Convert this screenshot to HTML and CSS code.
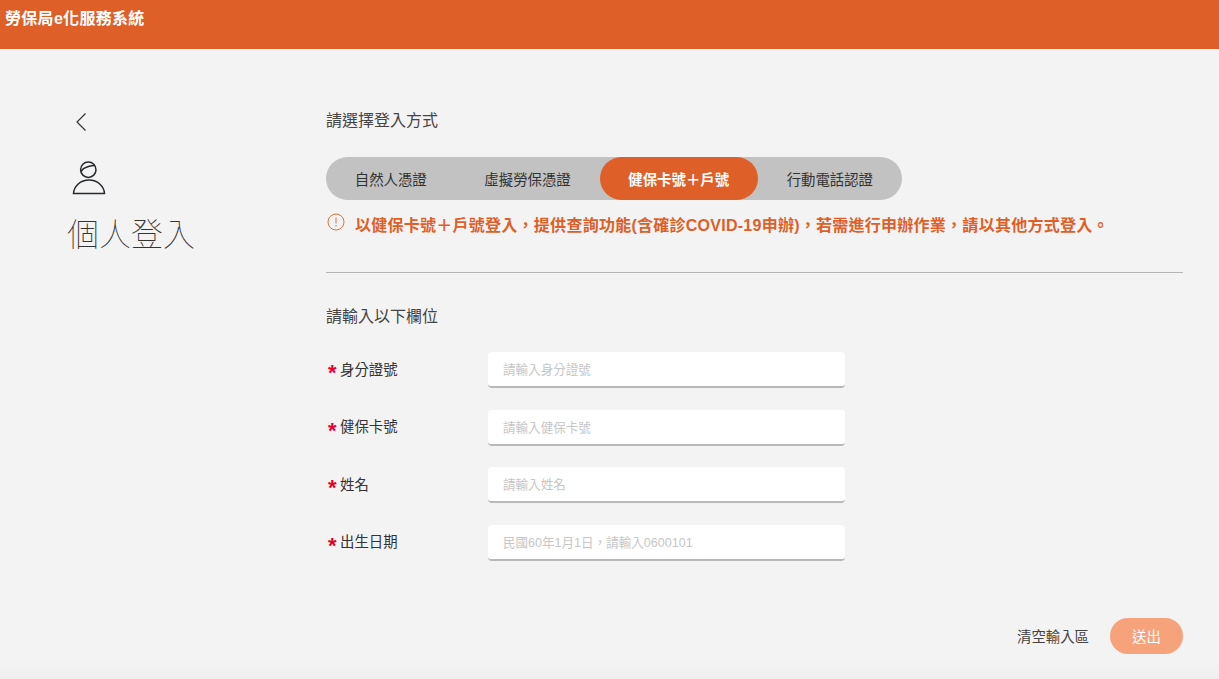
FILE: index.html
```html
<!DOCTYPE html>
<html lang="zh-Hant">
<head>
<meta charset="utf-8">
<title>勞保局e化服務系統</title>
<link rel="stylesheet" href="styles.css">
</head>
<body>
<header class="topbar"><span class="brand">勞保局e化服務系統</span></header>
<div class="page">
  <aside class="side">
    <svg class="back" width="12" height="20" viewBox="0 0 12 20"><path d="M10.500 1.500 2 10l8.500 8.500" fill="none" stroke="#333" stroke-width="1.200"/></svg>
    <svg class="person" width="36" height="36" viewBox="0 0 36 36" fill="none" stroke="#25282c" stroke-width="1.500">
      <circle cx="17.300" cy="9.700" r="7.700"/>
      <path d="M10 11.500c1.500-2.500 3.500-3.800 6-4.500 3-.8 5-2 8-1.500"/>
      <path d="M2.500 33.500h31C33 26 26.500 20 18 20S3 26 2.500 33.500Z"/>
    </svg>
    <h1 class="title">個人登入</h1>
  </aside>
  <main class="main">
    <h2 class="section">請選擇登入方式</h2>
    <div class="tabs">
      <span class="tab">自然人憑證</span>
      <span class="tab">虛擬勞保憑證</span>
      <span class="tab active">健保卡號＋戶號</span>
      <span class="tab">行動電話認證</span>
    </div>
    <p class="notice">
      <svg class="alert" width="18" height="18" viewBox="0 0 18 18" fill="none" stroke="#e0703f" stroke-width="1"><circle cx="9" cy="9" r="8"/><path d="M9 4.500v6M9 12v1.500"/></svg>
      <span>以健保卡號＋戶號登入，提供查詢功能(含確診COVID-19申辦)，若需進行申辦作業，請以其他方式登入。</span>
    </p>
    <hr class="rule">
    <h2 class="section second">請輸入以下欄位</h2>
    <form class="fields">
      <label class="row"><span class="label"><i class="star">*</i>身分證號</span><input class="input" placeholder="請輸入身分證號"></label>
      <label class="row"><span class="label"><i class="star">*</i>健保卡號</span><input class="input" placeholder="請輸入健保卡號"></label>
      <label class="row"><span class="label"><i class="star">*</i>姓名</span><input class="input" placeholder="請輸入姓名"></label>
      <label class="row"><span class="label"><i class="star">*</i>出生日期</span><input class="input" placeholder="民國60年1月1日，請輸入0600101"></label>
    </form>
    <div class="actions">
      <span class="clear">清空輸入區</span>
      <span class="submit">送出</span>
    </div>
  </main>
</div>
</body>
</html>
```
FILE: styles.css
```css
* { box-sizing: border-box; }
html, body { margin: 0; height: 100%; }
body {
  background: linear-gradient(to top, #eeeeee, #f3f3f3 14px);
  color: #333;
  font-family: "Liberation Sans", "Noto Sans CJK TC", sans-serif;
  overflow: hidden;
}
.topbar {
  height: 49px;
  background: #de5f28;
  padding: 8px 5px 0;
}
.brand {
  display: block;
  color: #fff;
  font-size: 16px;
  letter-spacing: .3px;
  line-height: 21px;
  font-weight: 700;
}
.page {
  display: flex;
  padding-left: 67px;
  padding-right: 36px;
}
.side {
  width: 259px;
  flex: none;
  padding-top: 63px;
  display: flex;
  flex-direction: column;
  align-items: flex-start;
}
.back { margin-left: 8px; display: block; }
.person { margin: 28px 0 0 4px; display: block; }
.title {
  margin: 14px 0 0;
  font-size: 32px;
  line-height: 44px;
  font-weight: 100;
  color: #333;
  font-family: "Noto Sans CJK TC", sans-serif;
}
.main { flex: 1; padding-top: 61px; }
.section {
  margin: 0;
  font-size: 16px;
  line-height: 21px;
  font-weight: 400;
  color: #444;
}
.tabs {
  margin-top: 26px;
  height: 43px;
  width: 576px;
  border-radius: 22px;
  background: #c2c2c2;
  display: flex;
  align-items: center;
  font-size: 14.400px;
  color: #333;
}
.tab {
  height: 43px;
  display: flex;
  align-items: center;
  padding: 0 28.800px;
  border-radius: 22px;
  white-space: nowrap;
}
.active { background: #de5f28; color: #fff; font-weight: 700; }
.notice {
  margin: 15px 0 0;
  display: flex;
  align-items: flex-start;
  gap: 13px;
  font-size: 16px;
  letter-spacing: .26px;
  line-height: 22px;
  font-weight: 700;
  color: #de5f28;
}
.alert { margin-top: -2px; flex: none; margin-left: 1px; margin-right: -3px; }
.rule {
  margin: 35px 0 0;
  border: 0;
  border-top: 1px solid #b4b4b4;
}
.second { margin-top: 33px; }
.fields {
  margin-top: 25px;
  display: flex;
  flex-direction: column;
  gap: 21.600px;
}
.row { display: flex; align-items: center; height: 36px; }
.label {
  width: 162px;
  flex: none;
  display: flex;
  align-items: center;
  font-size: 14.400px;
  color: #333;
  padding-bottom: 4px;
}
.star {
  width: 14px;
  padding-left: 2px;
  font-style: normal;
  font-weight: 700;
  color: #e6002d;
  font-size: 22px;
  line-height: 22px;
  height: 12px;
}
.input {
  width: 357px;
  height: 36px;
  border: 0;
  border-bottom: 2px solid #b8b8b8;
  border-radius: 4px;
  background: #fff;
  padding: 2px 15px 0;
  font: inherit;
  font-size: 12.550px;
  color: #333;
  outline: none;
}
.input::placeholder { color: #c6c6c6; opacity: 1; }
.actions {
  margin-top: 57px;
  display: flex;
  justify-content: flex-end;
  align-items: center;
  gap: 21px;
}
.clear { font-size: 14.400px; color: #444; }
.submit {
  width: 73px;
  height: 36px;
  border-radius: 18px;
  background: #f6a27a;
  color: #fff;
  font-size: 14.400px;
  display: flex;
  align-items: center;
  justify-content: center;
}
```
